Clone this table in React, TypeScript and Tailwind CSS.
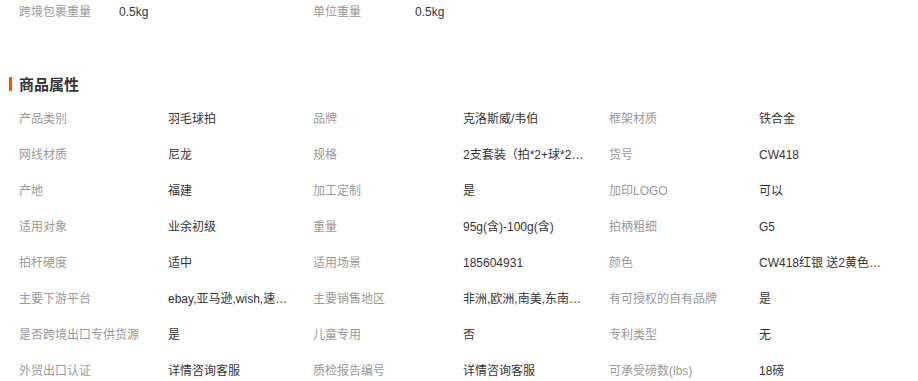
import React from "react";

const attrs: [string, string][] = [
  ["产品类别", "羽毛球拍"],
  ["品牌", "克洛斯威/韦伯"],
  ["框架材质", "铁合金"],
  ["网线材质", "尼龙"],
  ["规格", "2支套装（拍*2+球*2）送拍包"],
  ["货号", "CW418"],
  ["产地", "福建"],
  ["加工定制", "是"],
  ["加印LOGO", "可以"],
  ["适用对象", "业余初级"],
  ["重量", "95g(含)-100g(含)"],
  ["拍柄粗细", "G5"],
  ["拍杆硬度", "适中"],
  ["适用场景", "185604931"],
  ["颜色", "CW418红银 送2黄色羽毛球"],
  ["主要下游平台", "ebay,亚马逊,wish,速卖通"],
  ["主要销售地区", "非洲,欧洲,南美,东南亚,北美"],
  ["有可授权的自有品牌", "是"],
  ["是否跨境出口专供货源", "是"],
  ["儿童专用", "否"],
  ["专利类型", "无"],
  ["外贸出口认证", "详情咨询客服"],
  ["质检报告编号", "详情咨询客服"],
  ["可承受磅数(lbs)", "18磅"],
];

const font = {
  fontFamily: '"Liberation Sans", Arial, "Noto Sans CJK SC", sans-serif',
};

export default function App() {
  return (
    <div className="w-[918px] h-[381px] overflow-hidden bg-white text-[12px] leading-none" style={font}>
      <div className="flex h-6 items-center pl-[19px]">
        <div className="flex w-[294px] items-center">
          <span className="w-[100px] text-[#999]">跨境包裹重量</span>
          <span className="text-[#333]">0.5kg</span>
        </div>
        <div className="flex items-center">
          <span className="w-[102px] text-[#999]">单位重量</span>
          <span className="text-[#333]">0.5kg</span>
        </div>
      </div>

      <div className="mt-[50px] flex h-5 items-center">
        <span className="ml-[9px] h-[14px] w-[3px] bg-[#ff5000]" />
        <h3 className="ml-[7px] text-[15px] font-bold text-[#333]">商品属性</h3>
      </div>

      <div className="mt-[7px] grid grid-cols-[149px_145px_150px_146px_150px_1fr] pl-[19px]">
        {attrs.map(([k, v]) => (
          <React.Fragment key={k}>
            <div className="flex h-9 items-center text-[#999]">{k}</div>
            <div className="flex h-9 items-center text-[#333]">
              <span className="block max-w-[124px] truncate leading-[16px]">{v}</span>
            </div>
          </React.Fragment>
        ))}
      </div>
    </div>
  );
}
